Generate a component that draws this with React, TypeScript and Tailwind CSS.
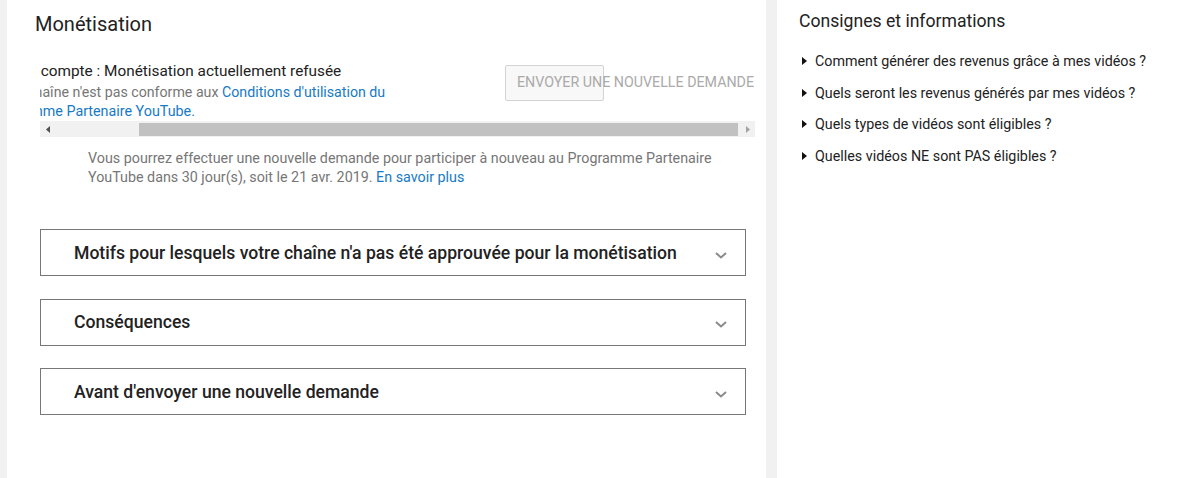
const sections = [
  "Motifs pour lesquels votre chaîne n'a pas été approuvée pour la monétisation",
  "Conséquences",
  "Avant d'envoyer une nouvelle demande",
];

const guides = [
  "Comment générer des revenus grâce à mes vidéos ?",
  "Quels seront les revenus générés par mes vidéos ?",
  "Quels types de vidéos sont éligibles ?",
  "Quelles vidéos NE sont PAS éligibles ?",
];

function Arrow({ dir, color }: { dir: "left" | "right"; color: string }) {
  return (
    <svg width="4" height="7" viewBox="0 0 4 7">
      <polygon points={dir === "left" ? "4,0 0,3.5 4,7" : "0,0 4,3.5 0,7"} fill={color} />
    </svg>
  );
}

function Scrollbar() {
  return (
    <div className="flex h-[16px] items-center bg-[#f1f1f1]">
      <div className="flex w-[15px] shrink-0 justify-center">
        <Arrow dir="left" color="#505050" />
      </div>
      <div className="ml-[84px] h-[13px] w-[599px] bg-[#c1c1c1]" />
      <div className="ml-[2px] flex w-[15px] shrink-0 justify-center">
        <Arrow dir="right" color="#a3a3a3" />
      </div>
    </div>
  );
}

function Chevron() {
  return (
    <svg width="12" height="7" viewBox="0 0 12 7" className="mt-[5px]">
      <polyline points="1,1 6,5.5 11,1" fill="none" stroke="#8a8a8a" strokeWidth="2" />
    </svg>
  );
}

export default function App() {
  return (
    <div className="flex min-h-[478px] gap-[11px] bg-[#f1f1f1] pl-[7px] font-['Roboto',sans-serif] text-[#222]">
      <main className="w-[759px] shrink-0 bg-white pt-[9px]">
        <h1 className="pl-[28px] pt-[2px] text-[20px] leading-[26px]">Monétisation</h1>

        <div className="ml-[33px] mt-[24px] w-[715px]">
          <div className="overflow-hidden">
            <div className="flex">
              <div className="w-[465px] shrink-0">
                <div className="ml-[-65px] whitespace-nowrap text-[15.35px] leading-[20px]">
                  Statut du compte : Monétisation actuellement refusée
                </div>
                <div className="ml-[-50px] mt-[2px] whitespace-nowrap text-[14.2px] leading-[19px] text-[#767676]">
                  Votre chaîne n'est pas conforme aux{" "}
                  <a className="text-[#167ac6]">Conditions d'utilisation du</a>
                </div>
                <div className="ml-[-52px] whitespace-nowrap text-[14.3px] leading-[19px] text-[#167ac6]">
                  Programme Partenaire YouTube.
                </div>
              </div>
              <button className="mt-[4px] h-[36px] w-[99px] shrink-0 whitespace-nowrap rounded-[2px] border border-[#d3d3d3] bg-[#f8f8f8] px-[11px] text-left text-[14.25px] uppercase text-[#aaa]">
                Envoyer une nouvelle demande
              </button>
            </div>
          </div>
          <Scrollbar />

          <p className="ml-[48px] mt-[12px] w-[650px] text-[14.3px] leading-[19px] text-[#767676]">
            Vous pourrez effectuer une nouvelle demande pour participer à nouveau au Programme
            Partenaire YouTube dans 30 jour(s), soit le 21 avr. 2019.{" "}
            <a className="text-[#167ac6]">En savoir plus</a>
          </p>

          <div className="mt-[42px] flex w-[706px] flex-col gap-[22.5px]">
            {sections.map((s) => (
              <div
                key={s}
                className="flex h-[47px] items-center justify-between border border-[#777] pl-[33px] pr-[18px]"
              >
                <span className="text-[17.6px] font-medium leading-[24px] text-[#222]">{s}</span>
                <Chevron />
              </div>
            ))}
          </div>
        </div>
      </main>

      <aside className="flex-1 bg-white pl-[22px] pt-[9px]">
        <h2 className="text-[17.6px] leading-[24px]">Consignes et informations</h2>
        <ul className="mt-[18px] flex flex-col gap-[11.67px]">
          {guides.map((g) => (
            <li key={g} className="flex items-center text-[14.3px] leading-[20px] text-[#222]">
              <span className="ml-[3px] mr-[8px] flex">
                <svg width="5" height="8" viewBox="0 0 5 8">
                  <polygon points="0,0 5,4 0,8" fill="#111" />
                </svg>
              </span>
              {g}
            </li>
          ))}
        </ul>
      </aside>
    </div>
  );
}
